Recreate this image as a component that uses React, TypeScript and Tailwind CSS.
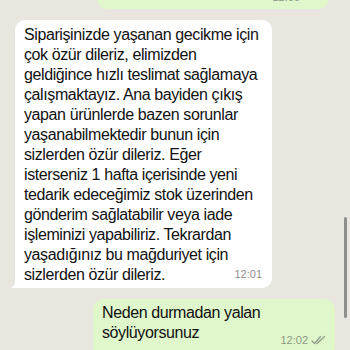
import React from "react";

const lines = [
  "Siparişinizde yaşanan gecikme için",
  "çok özür dileriz, elimizden",
  "geldiğince hızlı teslimat sağlamaya",
  "çalışmaktayız. Ana bayiden çıkış",
  "yapan ürünlerde bazen sorunlar",
  "yaşanabilmektedir bunun için",
  "sizlerden özür dileriz. Eğer",
  "isterseniz 1 hafta içerisinde yeni",
  "tedarik edeceğimiz stok üzerinden",
  "gönderim sağlatabilir veya iade",
  "işleminizi yapabiliriz. Tekrardan",
  "yaşadığınız bu mağduriyet için",
];

function Checks() {
  return (
    <svg width="15" height="10" viewBox="0 0 15 10" fill="none" stroke="#8f9a8a" strokeWidth="1.2" strokeLinecap="round" strokeLinejoin="round">
      <path d="M1 6 L3.5 8.5 L9.5 1.5" />
      <path d="M6 8.5 L13.5 1.5" />
    </svg>
  );
}

function Tail() {
  return (
    <svg className="absolute bottom-0 left-[-5px]" width="12" height="14" viewBox="0 0 12 14">
      <path d="M12 0 L12 14 L0 14 C4 13 6 10 6 0 Z" fill="#ffffff" />
    </svg>
  );
}

export default function App() {
  return (
    <div
      className="relative w-[350px] h-[350px] overflow-hidden bg-[#e9e6e0]"
      style={{ fontFamily: '"Liberation Sans", Arial, sans-serif' }}
    >
      <div className="flex flex-col">
        <div className="ml-[97px] mt-[-31px] flex h-[40px] w-[232px] items-end justify-end rounded-[10px] bg-[#e0f6cb] pb-[6px] pr-[8px]">
          <span className="text-[11px] leading-[12px] text-[#8c9a86]">12:00 ✓✓</span>
        </div>

        <div className="relative ml-[15px] mt-[11px] flex w-[257px] flex-col rounded-[10px] rounded-bl-[4px] bg-white pl-[9px] pr-[10px] pt-[5px] pb-[3px] text-[16px] leading-[20px] tracking-[-0.4px] text-[#111]">
          {lines.map((l, i) => (
            <div key={i} className="whitespace-nowrap">{l}</div>
          ))}
          <div className="flex items-end justify-between">
            <span className="whitespace-nowrap">sizlerden özür dileriz.</span>
            <span className="mb-[5px] text-[11px] leading-[12px] tracking-normal text-[#8e8e8e]">12:01</span>
          </div>
          <Tail />
        </div>

        <div className="ml-[93px] mt-[11px] flex w-[242px] flex-col rounded-[10px] bg-[#e0f6cb] pl-[9px] pr-[9px] pt-[4px] pb-[6px] text-[16px] leading-[20px] tracking-[-0.4px] text-[#111]">
          <div className="whitespace-nowrap">Neden durmadan yalan</div>
          <div className="flex items-end justify-between">
            <span className="whitespace-nowrap">söylüyorsunuz</span>
            <span className="mb-[-3px] flex items-center gap-[3px] text-[11px] leading-[12px] tracking-normal text-[#8c9a86]">
              12:02 <Checks />
            </span>
          </div>
          <div className="h-[8px]" />
        </div>
      </div>

      <div className="absolute left-[344px] top-[217px] h-[101px] w-[3px] rounded-full bg-[#8e8e8e]" />
    </div>
  );
}
